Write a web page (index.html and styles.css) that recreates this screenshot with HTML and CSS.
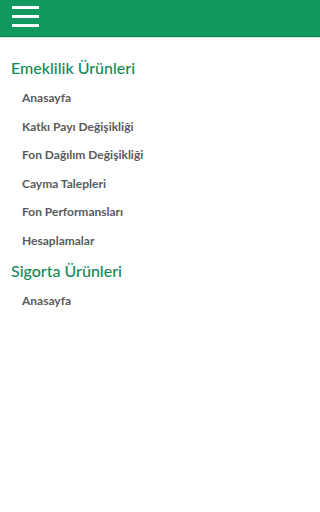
FILE: index.html
```html
<!DOCTYPE html>
<html lang="tr">
<head>
<meta charset="utf-8">
<title>Menü</title>
<link rel="stylesheet" href="styles.css">
</head>
<body>
<header class="topbar">
  <button class="menu-btn" aria-label="Menü">
    <span class="bar"></span>
    <span class="bar"></span>
    <span class="bar"></span>
  </button>
</header>
<nav class="nav">
  <h2 class="section-title">Emeklilik Ürünleri</h2>
  <ul class="links">
    <li>Anasayfa</li>
    <li>Katkı Payı Değişikliği</li>
    <li>Fon Dağılım Değişikliği</li>
    <li>Cayma Talepleri</li>
    <li>Fon Performansları</li>
    <li>Hesaplamalar</li>
  </ul>
  <h2 class="section-title">Sigorta Ürünleri</h2>
  <ul class="links">
    <li>Anasayfa</li>
  </ul>
</nav>
</body>
</html>
```

FILE: styles.css
```css
html, body {
  margin: 0;
  padding: 0;
  background: #ffffff;
  font-family: "Lato", "Noto Sans", sans-serif;
}

.topbar {
  height: 36px;
  background: #11985e;
  border-bottom: 1px solid #0d7f4d;
  box-shadow: 0 1px 0 #c4e8df;
  display: flex;
  align-items: flex-start;
}

.menu-btn {
  margin: 6px 0 0 12px;
  padding: 0;
  border: 0;
  background: transparent;
  width: 27px;
  display: flex;
  flex-direction: column;
  gap: 6px;
}

.bar {
  display: block;
  height: 3px;
  width: 27px;
  background: #ffffff;
}

.nav {
  padding-top: 16px;
}

.section-title {
  margin: 0 0 1px;
  padding-left: 11px;
  font-size: 16px;
  line-height: 30px;
  font-weight: 500;
  color: #128a57;
}

.links {
  list-style: none;
  margin: 0;
  padding: 0;
}

.links li {
  padding-left: 22px;
  font-size: 12px;
  line-height: 28.6px;
  font-weight: 700;
  color: #5a5a5a;
}
```
